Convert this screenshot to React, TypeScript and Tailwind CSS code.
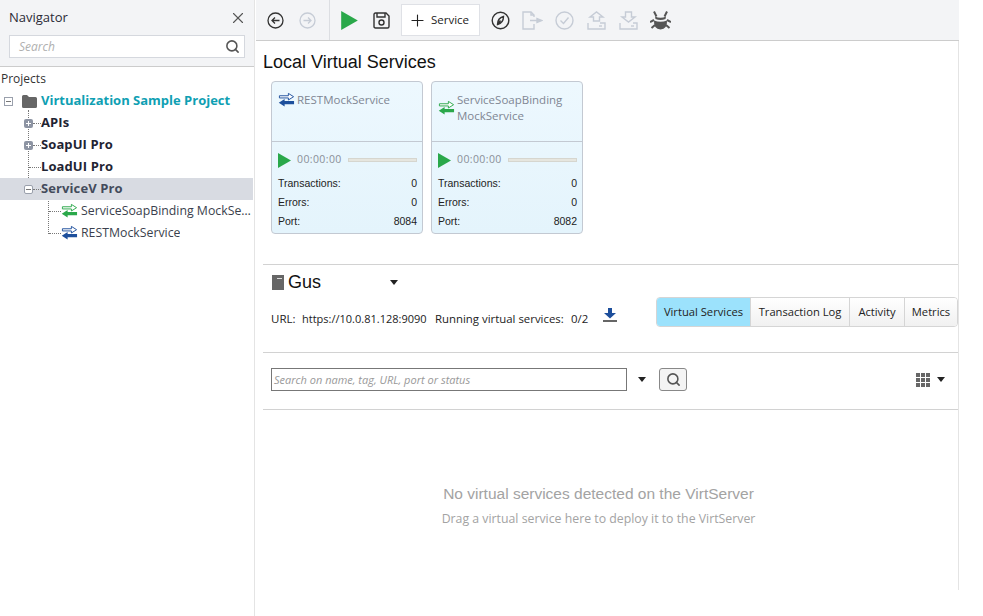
import { Plus, Search, X } from "lucide-react"

const uiFont = "font-['Open_Sans','Noto_Sans',sans-serif]"
const arial = "font-['Liberation_Sans',Arial,sans-serif]"

function ArrowsIcon({ color, className = "" }: { color: string; className?: string }) {
  return (
    <svg width="17" height="16" viewBox="0 0 18 16" className={className}>
      <path d="M1.5 3.5H11V1l5.5 3.5L11 8V5.8H1.5z" fill="#fff" stroke={color} strokeWidth="1" />
      <path d="M17 9H7V7L.8 11 7 15v-2.5h10z" fill={color} />
    </svg>
  )
}

function Play({ size = 14 }: { size?: number }) {
  return (
    <svg width={size} height={size + 2} viewBox="0 0 14 16">
      <path d="M0 0L14 8L0 16z" fill="#2aa84a" />
    </svg>
  )
}

function Caret() {
  return (
    <svg width="8" height="5" viewBox="0 0 8 5">
      <path d="M0 0H8L4 5z" fill="#222" />
    </svg>
  )
}

function TreeToggle({ open, filled }: { open?: boolean; filled?: boolean }) {
  return (
    <span
      className={`flex h-[9px] w-[9px] items-center justify-center rounded-[2px] ${
        filled ? "bg-[#8d94a3]" : "border border-[#9aa0ac] bg-white"
      }`}
    >
      <span className={`relative h-px w-[5px] ${filled ? "bg-white" : "bg-[#777]"}`}>
        {!open && <span className="absolute top-[-2px] left-[2px] h-[5px] w-px bg-white" />}
      </span>
    </span>
  )
}

function TreeRow({
  label,
  open,
  noToggle,
  selected,
}: {
  label: string
  open?: boolean
  noToggle?: boolean
  selected?: boolean
}) {
  return (
    <div className={`relative flex h-[22px] items-center pl-[24px] ${selected ? "bg-[#d8dbe2]" : ""}`}>
      <span className="flex w-[17px] items-center">
        {noToggle ? (
          <span className="ml-[5px] w-[12px] border-t border-dotted border-[#777]" />
        ) : (
          <>
            <TreeToggle open={open} filled={!open} />
            <span className="w-[8px] border-t border-dotted border-[#777]" />
          </>
        )}
      </span>
      <span className={`text-[13px] font-bold tracking-[0.1px] ${selected ? "text-[#444b5c]" : "text-[#1f2433]"}`}>
        {label}
      </span>
    </div>
  )
}

function LeafRow({ label, color }: { label: string; color: string }) {
  return (
    <div className="flex h-[22px] items-center pl-[49px]">
      <span className="w-[12px] shrink-0 border-t border-dotted border-[#777]" />
      <ArrowsIcon color={color} className="shrink-0" />
      <span className="ml-[3px] truncate text-[12.3px] text-[#3b3f4d]">{label}</span>
    </div>
  )
}

function Navigator() {
  return (
    <aside className="w-[255px] shrink-0 border-r border-[#e4e4e4] bg-white">
      <div className="h-[67px] border-b border-[#ccc] bg-[#f3f4f6] px-[9px]">
        <div className="flex h-[35px] items-center justify-between">
          <span className="text-[13px] text-[#2b2b36]">Navigator</span>
          <X size={18} strokeWidth={1.5} className="mr-[-2px] text-[#555]" />
        </div>
        <div className="flex h-[23px] w-[236px] items-center justify-between border border-[#d5d8de] bg-white pr-[4px] pl-[9px]">
          <span className="text-[12px] text-[#b0b0b0] italic">Search</span>
          <Search size={15} strokeWidth={2.5} className="text-[#555]" />
        </div>
      </div>
      <div className="pl-[1px] text-[12px] leading-[23px] text-[#333]">Projects</div>
      <div className="relative mr-[1px]">
        <span className="absolute top-[20px] left-[28px] h-[70px] border-l border-dotted border-[#777]" />
        <span className="absolute top-[108px] left-[48px] h-[36px] border-l border-dotted border-[#777]" />
        <div className="flex h-[22px] items-center pl-[4px]">
          <span className="flex h-[9px] w-[9px] items-center justify-center border border-[#9aa0ac]">
            <span className="h-px w-[5px] bg-[#777]" />
          </span>
          <svg width="15" height="13" viewBox="0 0 15 13" className="ml-[9px]">
            <path d="M0 1.5Q0 0 1.5 0H5L7 2H13.5Q15 2 15 3.5V11.5Q15 13 13.5 13H1.5Q0 13 0 11.5z" fill="#666" />
          </svg>
          <span className="ml-[4px] text-[13px] font-bold text-[#0f9fb3]">Virtualization Sample Project</span>
        </div>
        <TreeRow label="APIs" />
        <TreeRow label="SoapUI Pro" />
        <TreeRow label="LoadUI Pro" noToggle />
        <TreeRow label="ServiceV Pro" open selected />
        <LeafRow label="ServiceSoapBinding MockService" color="#2aa84a" />
        <LeafRow label="RESTMockService" color="#1d4f9c" />
      </div>
    </aside>
  )
}

function ToolButton({ children, className = "" }: { children: React.ReactNode; className?: string }) {
  return <span className={`flex items-center justify-center ${className}`}>{children}</span>
}

function Toolbar() {
  const off = "#c6ccd6"
  return (
    <div className="flex h-[41px] items-center border-b border-[#ccc] bg-[#f3f4f6]">
      <ToolButton className="w-[38px]">
        <svg width="17" height="17" viewBox="0 0 17 17" fill="none" stroke="#333" strokeWidth="1.3">
          <circle cx="8.5" cy="8.5" r="7.5" />
          <path d="M12.5 8.5H5M8 5.5l-3 3 3 3" />
        </svg>
      </ToolButton>
      <ToolButton className="w-[26px]">
        <svg width="17" height="17" viewBox="0 0 17 17" fill="none" stroke={off} strokeWidth="1.3">
          <circle cx="8.5" cy="8.5" r="7.5" />
          <path d="M4.5 8.5H12M9 5.5l3 3-3 3" />
        </svg>
      </ToolButton>
      <span className="ml-[9px] h-[40px] w-px bg-[#dcdee2]" />
      <ToolButton className="ml-[11px]">
        <Play size={17} />
      </ToolButton>
      <ToolButton className="ml-[15px]">
        <svg width="17" height="17" viewBox="0 0 17 17" fill="none" stroke="#333" strokeWidth="1.4">
          <path d="M1 2.5Q1 1 2.5 1H13L16 4V14.5Q16 16 14.5 16H2.5Q1 16 1 14.5z" />
          <path d="M4 1V5H12V1" />
          <circle cx="8.5" cy="10.5" r="2.5" />
        </svg>
      </ToolButton>
      <div className="ml-[11px] flex h-[32px] w-[79px] items-center border border-[#dfe1e6] bg-white pl-[7px]">
        <Plus size={19} strokeWidth={1.4} className="ml-[-1px] text-[#222]" />
        <span className="ml-[4px] text-[11.5px] text-[#222]">Service</span>
      </div>
      <ToolButton className="ml-[11px]">
        <svg width="19" height="19" viewBox="0 0 19 19" fill="none" stroke="#333" strokeWidth="1.4">
          <circle cx="9.5" cy="9.5" r="8.3" />
          <path d="M6.5 13.5C6.5 9.5 9 6.5 12.5 5.5C12.5 9.5 10 12.5 6.5 13.5zM6.5 13.5L9.5 9.5" />
        </svg>
      </ToolButton>
      <ToolButton className="ml-[12px]">
        <svg width="21" height="19" viewBox="0 0 21 19" fill="none" stroke={off} strokeWidth="1.4">
          <path d="M12 6V4L9 1H1V18H12V13" />
          <path d="M9 1V4H12" />
          <path d="M8 9.5H15V7.5L20 9.5L15 11.5V9.5" fill={off} />
        </svg>
      </ToolButton>
      <ToolButton className="ml-[12px]">
        <svg width="19" height="19" viewBox="0 0 19 19" fill="none" stroke={off} strokeWidth="1.4">
          <circle cx="9.5" cy="9.5" r="8.5" />
          <path d="M5.5 9.5l3 3 5-6" />
        </svg>
      </ToolButton>
      <ToolButton className="ml-[13px]">
        <svg width="19" height="19" viewBox="0 0 19 19" fill="none" stroke={off} strokeWidth="1.4">
          <path d="M6.5 10V6H3L9.5 1L16 6H12.5V10z" />
          <path d="M1 12V18H18V12H13" />
          <path d="M12 15H15" />
        </svg>
      </ToolButton>
      <ToolButton className="ml-[13px]">
        <svg width="19" height="19" viewBox="0 0 19 19" fill="none" stroke={off} strokeWidth="1.4">
          <path d="M6.5 1V6H3L9.5 11L16 6H12.5V1z" />
          <path d="M1 12V18H18V12H14" />
          <path d="M12 15H15" />
        </svg>
      </ToolButton>
      <ToolButton className="ml-[12px]">
        <svg width="21" height="19" viewBox="0 0 21 19" fill="#555">
          <path d="M5 5.5Q10.5 8 16 5.5L15.5 8Q10.5 10 5.5 8z" />
          <path d="M4 9.5Q10.5 12 17 9.5Q17.5 18 10.5 18.5Q3.5 18 4 9.5z" />
          <path d="M4 0.5L6.5 5.5M17 0.5L14.5 5.5M0 11L4 9M21 11L17 9M1.5 17L5 14M19.5 17L16 14" stroke="#555" strokeWidth="2" />
        </svg>
      </ToolButton>
    </div>
  )
}

function StatRow({ label, value }: { label: string; value: string }) {
  return (
    <div className={`flex h-[19px] items-center justify-between text-[10.5px] text-[#222] ${arial}`}>
      <span>{label}</span>
      <span>{value}</span>
    </div>
  )
}

function ServiceCard({ lines, color, port }: { lines: string[]; color: string; port: string }) {
  return (
    <div className="h-[153px] w-[152px] rounded-[4px] border border-[#c3c9d2] bg-gradient-to-b from-[#edf8fe] to-[#e4f4fc]">
      <div className="h-[60px] border-b border-[#c3c9d2] pt-[10px] pl-[6px]">
        <div className="flex items-center">
          <ArrowsIcon color={color} className="shrink-0" />
          <div className="ml-[2px] text-[11.5px] leading-[16px] text-[#7f8693]">
            {lines.map((line) => (
              <div key={line}>{line}</div>
            ))}
          </div>
        </div>
      </div>
      <div className="pr-[5px] pl-[6px] pt-[10px]">
        <div className="flex h-[16px] items-center">
          <Play size={13} />
          <span className="ml-[6px] text-[10.5px] tracking-[0.4px] text-[#8a8f98]">00:00:00</span>
          <span className="ml-[6px] h-[4px] flex-1 border border-[#d6d6cf] bg-[#e6e6df]" />
        </div>
        <div className="mt-[6px]">
          <StatRow label="Transactions:" value="0" />
          <StatRow label="Errors:" value="0" />
          <StatRow label="Port:" value={port} />
        </div>
      </div>
    </div>
  )
}

function ServerTabs() {
  const tabs = ["Virtual Services", "Transaction Log", "Activity", "Metrics"]
  const widths = ["w-[93px]", "w-[99px]", "w-[55px]", "w-[53px]"]
  return (
    <div className="flex h-[30px] overflow-hidden rounded-[4px] border border-[#d5d5d5]">
      {tabs.map((tab, i) => (
        <span
          key={tab}
          className={`flex items-center justify-center pt-[1px] text-[11.2px] text-[#222] ${widths[i]} ${
            i === 0 ? "bg-[#9ce2fc]" : "border-l border-[#d5d5d5] bg-gradient-to-b from-white to-[#f1f1f1]"
          }`}
        >
          {tab}
        </span>
      ))}
    </div>
  )
}

export default function App() {
  return (
    <div className={`flex h-[616px] w-[983px] overflow-hidden bg-white ${uiFont}`}>
      <Navigator />
      <main className="ml-px w-[703px] shrink-0">
        <Toolbar />
        <div className="h-[549px] border-r border-[#e4e4e4]">
          <h1 className={`pt-[2px] pl-[7px] text-[18px] leading-[38px] text-[#111] ${arial}`}>Local Virtual Services</h1>
          <div className="flex gap-[8px] pl-[15px]">
            <ServiceCard lines={["RESTMockService"]} color="#1d4f9c" port="8084" />
            <ServiceCard lines={["ServiceSoapBinding", "MockService"]} color="#2aa84a" port="8082" />
          </div>
          <div className="mt-[30px] ml-[7px] h-[89px] border-y border-[#d2d2d2]">
            <div className="flex h-[34px] items-center pl-[9px]">
              <svg width="12" height="15" viewBox="0 0 12 15">
                <path d="M0 0H12V15H0z" fill="#666" />
                <path d="M5 3H10V4H5z" fill="#ddd" />
              </svg>
              <span className={`ml-[4px] w-[102px] text-[18px] text-[#111] ${arial}`}>Gus</span>
              <Caret />
            </div>
            <div className="mt-[-2px] flex h-[30px] items-center pl-[8px]">
              <div className="mt-[14px] flex items-center text-[#222]">
                <span className="w-[31px] text-[11.5px]">URL:</span>
                <span className="w-[133px] text-[11px]">https://10.0.81.128:9090</span>
                <span className="w-[136px] text-[11.4px]">Running virtual services:</span>
                <span className="text-[11.4px]">0/2</span>
              </div>
              <svg width="14" height="14" viewBox="0 0 14 14" className="mt-[6px] ml-[15px]">
                <path d="M5 0H9V5H13L7 10.5L1 5H5z" fill="#1d4f9c" />
                <path d="M0 12H14V14H0z" fill="#666" />
              </svg>
              <div className="ml-auto">
                <ServerTabs />
              </div>
            </div>
          </div>
          <div className="ml-[7px] flex h-[57px] items-center border-b border-[#d2d2d2] pb-[3px] pl-[8px]">
            <div className="flex h-[23px] w-[356px] items-center border border-[#777] bg-white pt-[1px] pl-[2px]">
              <span className="text-[11px] text-[#999] italic">Search on name, tag, URL, port or status</span>
            </div>
            <span className="ml-[11px] flex">
              <Caret />
            </span>
            <span className="ml-[13px] flex h-[23px] w-[28px] items-center justify-center rounded-[3px] border border-[#888] bg-[#f4f4f4]">
              <Search size={15} strokeWidth={2.5} className="text-[#555]" />
            </span>
            <span className="ml-auto flex items-center pr-[13px]">
              <span className="grid grid-cols-3 gap-px">
                {Array.from({ length: 9 }, (_, i) => (
                  <span key={i} className="h-[4px] w-[4px] bg-[#666]" />
                ))}
              </span>
              <span className="ml-[7px] flex">
                <Caret />
              </span>
            </span>
          </div>
          <div className="mt-[72px] pr-[17px] text-center">
            <p className={`text-[15.5px] leading-[24px] text-[#a3a3a3] ${arial}`}>No virtual services detected on the VirtServer</p>
            <p className="mt-[1px] text-[12.3px] leading-[24px] text-[#a3a3a3]">Drag a virtual service here to deploy it to the VirtServer</p>
          </div>
        </div>
      </main>
    </div>
  )
}
